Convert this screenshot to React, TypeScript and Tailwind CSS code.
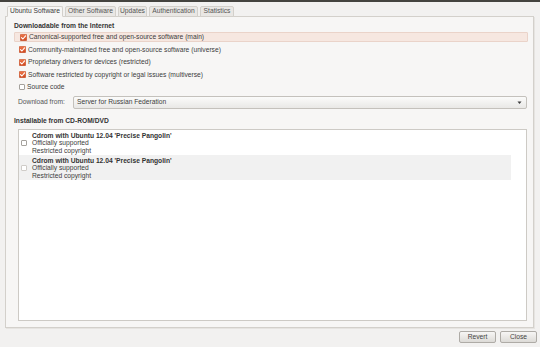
import React from 'react';

const tabs = [
  { label: 'Ubuntu Software', w: 'w-[56px]', active: true },
  { label: 'Other Software', w: 'w-[51px]' },
  { label: 'Updates', w: 'w-[29px]' },
  { label: 'Authentication', w: 'w-[49px]' },
  { label: 'Statistics', w: 'w-[34px]' },
];

const sources = [
  { label: 'Canonical-supported free and open-source software (main)', checked: true, focused: true },
  { label: 'Community-maintained free and open-source software (universe)', checked: true },
  { label: 'Proprietary drivers for devices (restricted)', checked: true },
  { label: 'Software restricted by copyright or legal issues (multiverse)', checked: true },
  { label: 'Source code', checked: false },
];

function CheckBox({ checked, dim }: { checked: boolean; dim?: boolean }) {
  if (checked) {
    return (
      <svg width="7" height="7" viewBox="0 0 7 7" className="shrink-0">
        <defs>
          <linearGradient id="cb" x1="0" y1="0" x2="0" y2="1">
            <stop offset="0" stopColor="#ef7a4e" />
            <stop offset="1" stopColor="#cf4419" />
          </linearGradient>
        </defs>
        <rect x="0.25" y="0.25" width="6.5" height="6.5" rx="1" fill="url(#cb)" stroke="#b8441f" strokeWidth="0.5" />
        <path d="M1.5 3.6 L2.9 5 L5.6 1.8" fill="none" stroke="#fff" strokeWidth="1.1" strokeLinecap="round" strokeLinejoin="round" />
      </svg>
    );
  }
  return (
    <div
      className={`w-[6px] h-[6px] shrink-0 rounded-[1px] border bg-white ${dim ? 'border-[#cfccc8]' : 'border-[#a5a29d]'}`}
    />
  );
}

function CdRow({ shaded }: { shaded?: boolean }) {
  return (
    <div className={`h-[25px] mr-[15px] pt-[1px] flex items-center gap-[5px] pl-[2px] ${shaded ? 'bg-[#f1f1f1]' : 'bg-white'}`}>
      <CheckBox checked={false} dim={shaded} />
      <div className="leading-[7.5px]">
        <div className="font-bold text-[#333]">Cdrom with Ubuntu 12.04 'Precise Pangolin'</div>
        <div>Officially supported</div>
        <div>Restricted copyright</div>
      </div>
    </div>
  );
}

export default function App() {
  return (
    <div className="w-[540px] h-[347px] bg-[#f2f1f0] overflow-hidden flex flex-col font-['Liberation_Sans',sans-serif] text-[6.7px] text-[#3c3c3c]">
      <div className="h-[2px] bg-[#44433f]" />

      {/* tabs */}
      <div className="h-[15px] flex items-end gap-[2px] pl-[7px] -mb-px relative z-10">
        {tabs.map((t) => (
          <div
            key={t.label}
            className={`${t.w} h-[11px] flex items-center justify-center border border-[#d3d0cb] rounded-t-[2px] ${
              t.active ? 'bg-[#f7f6f5] border-b-[#f7f6f5]' : 'bg-[#e9e7e4] text-[#555]'
            }`}
          >
            {t.label}
          </div>
        ))}
      </div>

      {/* notebook page */}
      <div className="ml-[5px] w-[529px] h-[312px] border border-[#d3d0cb] bg-[#f7f6f5] flex flex-col shadow-[1px_1px_0_#e6e4e1]">
        <div className="mt-[4px] h-[10px] pl-[8px] flex items-center font-bold text-[#333]">
          Downloadable from the Internet
        </div>

        <div className="flex flex-col pl-[8px] pr-[5px]">
          {sources.map((s) => (
            <div key={s.label} className="h-[12.5px] flex items-center">
              <div
                className={`w-full h-[10px] flex items-center gap-[2px] pl-[5px] ${
                  s.focused ? 'bg-[#f6e7e0] border border-[#ead3c9] rounded-[1px] pl-[4px]' : ''
                }`}
              >
                <CheckBox checked={s.checked} />
                <span>{s.label}</span>
              </div>
            </div>
          ))}
        </div>

        <div className="mt-[2.5px] h-[13px] flex items-center pl-[12px] pr-[6px]">
          <span className="w-[55px] shrink-0 text-[#555]">Download from:</span>
          <div className="flex-1 h-[13px] flex items-center justify-between pl-[3px] pr-[4px] border border-[#c4c1bc] rounded-[2px] bg-gradient-to-b from-[#fbfbfa] to-[#e9e8e6]">
            <span>Server for Russian Federation</span>
            <svg width="5" height="5" viewBox="0 0 5 5">
              <path d="M0.5 1.5 H4.5 L2.5 4 Z" fill="#3c3c3c" />
            </svg>
          </div>
        </div>

        <div className="mt-[7px] h-[10px] pl-[8px] flex items-center font-bold text-[#333]">
          Installable from CD-ROM/DVD
        </div>

        <div className="mt-[3px] ml-[12px] w-[509px] h-[192px] border border-[#cdcac5] bg-white flex flex-col">
          <CdRow />
          <CdRow shaded />
        </div>
      </div>

      {/* buttons */}
      <div className="flex justify-end gap-[4px] pr-[3px] pt-[3px]">
        {['Revert', 'Close'].map((b) => (
          <div
            key={b}
            className="w-[37px] h-[12px] flex items-center justify-center border border-[#aeaba6] rounded-[2px] bg-gradient-to-b from-[#f7f6f5] to-[#dddbd7] text-[#444]"
          >
            {b}
          </div>
        ))}
      </div>
    </div>
  );
}
